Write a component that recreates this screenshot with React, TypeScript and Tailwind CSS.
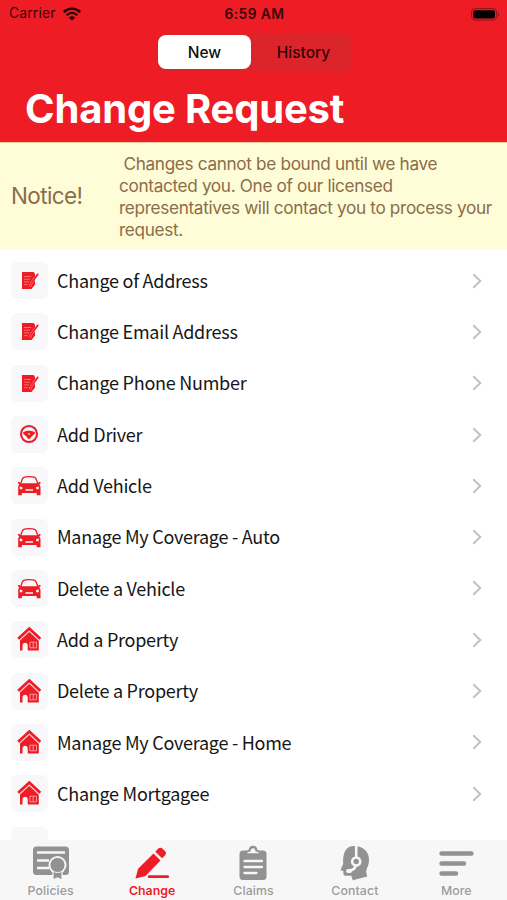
type IconKind = 'note' | 'wheel' | 'car' | 'house';

const RED = '#ee1c25';
const TILE = '#f8f8fb';

const rows: { label: string; icon: IconKind }[] = [
  { label: 'Change of Address', icon: 'note' },
  { label: 'Change Email Address', icon: 'note' },
  { label: 'Change Phone Number', icon: 'note' },
  { label: 'Add Driver', icon: 'wheel' },
  { label: 'Add Vehicle', icon: 'car' },
  { label: 'Manage My Coverage - Auto', icon: 'car' },
  { label: 'Delete a Vehicle', icon: 'car' },
  { label: 'Add a Property', icon: 'house' },
  { label: 'Delete a Property', icon: 'house' },
  { label: 'Manage My Coverage - Home', icon: 'house' },
  { label: 'Change Mortgagee', icon: 'house' },
];

function RowIcon({ kind }: { kind: IconKind }) {
  return (
    <svg width="37" height="37" viewBox="0 0 37 37" fill="none">
      {kind === 'note' && (
        <>
          <path d="M11 10h11.500l1.500 1.500V22.500l-3.500 4.500H11z" fill={RED} />
          <path d="M13 14.500h7M13 17.200h6M13 19.900h5M13 22.600h3.500" stroke="#f7868b" strokeWidth=".8" />
          <path d="M26.800 12.200l-6.400 8.800-1.500 3.200" stroke="#fbb4b8" strokeWidth="2.300" />
          <path d="M26.800 12.200l-6.400 8.800-1.200 2.600" stroke={RED} strokeWidth="1.500" strokeLinecap="round" />
        </>
      )}
      {kind === 'wheel' && (
        <>
          <circle cx="18" cy="18" r="8" stroke={RED} strokeWidth="2.100" />
          <path d="M12 16.500c2.500-2.500 9.500-2.500 12 0 .3 1.700-1.700 2.400-3.200 3.700-1 1-1.300 2.900-2.800 2.900s-1.800-1.900-2.800-2.900c-1.500-1.300-3.500-2-3.200-3.700z" fill={RED} />
          <circle cx="18" cy="18" r="1" fill="#fbb4b8" />
        </>
      )}
      {kind === 'car' && (
        <>
          <path d="M9.600 17.200c1-4 1.800-6.200 3.200-6.900 2-.9 8.900-.9 10.900 0 1.400.7 2.200 2.900 3.200 6.900" stroke={RED} strokeWidth="1.300" />
          <path d="M6.800 15.300c1.300-.6 2.300-.1 2.600.9h17.700c.3-1 1.300-1.500 2.600-.9l-.5 1.400-1 .3c1 1.500 1.500 3 1.300 5v6.300h-3.800v-2.300H10.900v2.300H7.200V22c-.2-2 .1-3.500 1.100-5l-1-.3z" fill={RED} />
          <path d="M8.800 19.200l2.800 1.200-.5 1.800H8.800zM27.700 19.200l-2.800 1.200.5 1.800h2.300zM14.500 22.300h7.500v1.500h-7.500z" fill={TILE} />
        </>
      )}
      {kind === 'house' && (
        <>
          <path d="M9 17.600l9.200-8.200L27.800 17.600v12H16.700V24.500c0-3.600-5.200-3.600-5.200 0v5.100H9z" fill={RED} />
          <path d="M7.300 18.700l11-10.200 10.900 10.200" stroke="#fdd5d8" strokeWidth="3.700" />
          <path d="M7.200 17.800l11.100-10.200 11 10.200" stroke={RED} strokeWidth="2.700" />
          <path d="M18.900 21.200h6.600v5.600h-6.600zM22.200 21.200v5.600" stroke="#fbb4b8" strokeWidth=".8" />
        </>
      )}
    </svg>
  );
}

function StatusBar() {
  return (
    <div className="grid h-7 grid-cols-3 items-center pl-[9px] pr-[7px] text-[13.800px] text-[#3a0508]">
      <div className="-mt-px flex items-center gap-[7px]">
        <span className="tracking-[0.200px]">Carrier</span>
        <svg width="18" height="14" viewBox="0 0 18 14" fill="none" stroke="#250204" strokeWidth="2.400">
          <path d="M.8 5.100c4.700-4.600 11.700-4.600 16.400 0M3.700 8.100c3-3 7.600-3 10.600 0" />
          <path d="M9 13.600L5.900 10.500c1.700-1.700 4.500-1.700 6.200 0z" fill="#250204" stroke="none" />
        </svg>
      </div>
      <span className="text-center font-semibold tracking-[0.450px]">6:59 AM</span>
      <svg className="justify-self-end" width="29" height="13" viewBox="0 0 29 13">
        <rect x=".6" y=".6" width="25" height="11.500" rx="3.500" fill="none" stroke="#90131a" strokeWidth="1" />
        <rect x="2.200" y="2.200" width="21.800" height="8.300" rx="2" fill="#000" />
        <path d="M27 4.500c1.500.5 1.500 3.200 0 3.700z" fill="#90131a" />
      </svg>
    </div>
  );
}

const tabs = ['Policies', 'Change', 'Claims', 'Contact', 'More'] as const;

function TabIcon({ name }: { name: (typeof tabs)[number] }) {
  const gray = '#929292';
  return (
    <svg width="40" height="38" viewBox="0 0 40 38" fill="none">
      {name === 'Policies' && (
        <>
          <rect x="2" y="2.500" width="36" height="28.500" rx="3.500" fill={gray} />
          <path d="M6 8.500h28M6 16.500h12M6 24h12" stroke="#f7f7f7" strokeWidth="2.500" />
          <circle cx="26.500" cy="21" r="9" fill="#f7f7f7" />
          <path d="M22 27h9v9l-4.500-2.200-4.500 2.200z" fill={gray} stroke="#f7f7f7" strokeWidth="1.200" />
          <circle cx="26.500" cy="21" r="7.600" fill={gray} stroke="#f7f7f7" strokeWidth="1" />
        </>
      )}
      {name === 'Change' && (
        <>
          <path d="M21.500 9.500l7 7L13.500 32 3.500 34.500l2.600-9.700z" fill={RED} />
          <path d="M23.300 7.700l3-3.100c1.300-1.300 3-1.200 4.300.1l2.500 2.600c1.200 1.200 1.200 2.800 0 4l-3 3z" fill={RED} />
          <path d="M17.200 32.700h18.500" stroke={RED} strokeWidth="2.800" strokeLinecap="round" />
        </>
      )}
      {name === 'Claims' && (
        <>
          <rect x="6.500" y="6.500" width="27" height="29.500" rx="3.500" fill={gray} />
          <path d="M11.500 10.500c.3-3.200 1.500-3.800 4-4.200C16 3 17.500 1.800 20 1.800s4 1.200 4.500 4.500c2.500.4 3.700 1 4 4.200z" fill={gray} />
          <path d="M14 9.300c.4-1.500 1.500-1.500 3.500-1.800.2-2.200.8-3.200 2.500-3.200s2.300 1 2.500 3.200c2 .3 3.100.3 3.500 1.800z" fill="#f7f7f7" />
          <path d="M11.500 17h17.500M11.500 23h17.500M11.500 29h12" stroke="#f7f7f7" strokeWidth="2.300" strokeLinecap="round" />
        </>
      )}
      {name === 'Contact' && (
        <>
          <path d="M19 2c9 0 15 5.500 15 13.500 0 6.500-2.700 8.500-2.800 12.500l1 4.600L17.800 36.300l-1.500-4.600H11c-2.500 0-2.700-1.500-2.700-5H6.200c-.8-.4-.5-1 2-7C7.500 9.500 10.500 2 19 2z" fill={gray} />
          <path d="M21.200 1v12M21 20c0 4.500-2.800 6.200-7.500 6.800" stroke="#f7f7f7" strokeWidth="2.600" />
          <circle cx="21.200" cy="17.500" r="4" fill={gray} stroke="#f7f7f7" strokeWidth="2.600" />
          <path d="M13 27h2" stroke="#f7f7f7" strokeWidth="4" strokeLinecap="round" />
        </>
      )}
      {name === 'More' && (
        <path d="M5.500 9.500h30M5.500 19.500h22.500M5.500 29.500h14.500" stroke={gray} strokeWidth="4.400" strokeLinecap="round" />
      )}
    </svg>
  );
}

export default function App() {
  return (
    <div className="flex h-[900px] w-[507px] flex-col overflow-hidden bg-white font-['Inter',sans-serif]">
      <header className="h-[142px] shrink-0 bg-[#ee1c25]">
        <StatusBar />
        <div className="ml-[157px] mt-[6px] flex h-[37px] w-[195px] rounded-lg bg-[#dc242b] p-[1px] text-[15.500px] font-medium">
          <div className="flex h-[34px] w-[93px] items-center justify-center rounded-lg bg-white pt-[2px] text-[#111]">New</div>
          <div className="flex h-[34px] flex-1 items-center justify-center pt-[2px] pl-[5px] text-[#300507]">History</div>
        </div>
        <h1 className="mt-[13px] pl-[25px] text-[40px] leading-[50px] font-bold tracking-[-0.180px] text-white">Change Request</h1>
      </header>

      <section className="flex h-[107px] shrink-0 items-center border-t border-[#f7c9a5] bg-[#fffdd7] text-[#8a6d4b]">
        <div className="w-[119px] pl-[11px] text-[22.500px] tracking-[-0.600px]">Notice!</div>
        <p className="pt-[2px] text-[17.200px] leading-[22px] tracking-[-0.340px] whitespace-pre">
          {' Changes cannot be bound until we have\ncontacted you. One of our licensed\nrepresentatives will contact you to process your\nrequest.'}
        </p>
      </section>

      <main className="min-h-0 flex-1 overflow-hidden pt-[6px]">
        {rows.map((row) => (
          <div key={row.label} className="flex h-[51.300px] items-center pr-[25px] pl-[11px]">
            <div className="h-[37px] w-[37px] rounded-md bg-[#f8f8fb]">
              <RowIcon kind={row.icon} />
            </div>
            <span className="-mt-[1.500px] ml-[9px] flex-1 font-['Noto_Sans_CJK_SC',sans-serif] text-[18px] leading-6 tracking-[-0.260px] text-[#161616]">
              {row.label}
            </span>
            <svg width="10" height="16" viewBox="0 0 10 16" fill="none">
              <path d="M1.300 1.300L8.200 8l-6.900 6.700" stroke="#c3c3c5" strokeWidth="2.100" />
            </svg>
          </div>
        ))}
        <div className="mt-[7.500px] ml-[11px] h-[37px] w-[37px] rounded-md bg-[#f8f8fb]" />
      </main>

      <nav className="grid h-[60px] shrink-0 grid-cols-5 bg-[#f7f7f7]">
        {tabs.map((tab) => (
          <div key={tab} className="flex flex-col items-center pt-[4px]">
            <TabIcon name={tab} />
            <span
              className={
                tab === 'Change'
                  ? 'text-[12.300px] leading-[18px] font-semibold text-[#ee1c25]'
                  : 'text-[12.300px] leading-[18px] font-medium tracking-[0.100px] text-[#9b9b9b]'
              }
            >
              {tab}
            </span>
          </div>
        ))}
      </nav>
    </div>
  );
}
